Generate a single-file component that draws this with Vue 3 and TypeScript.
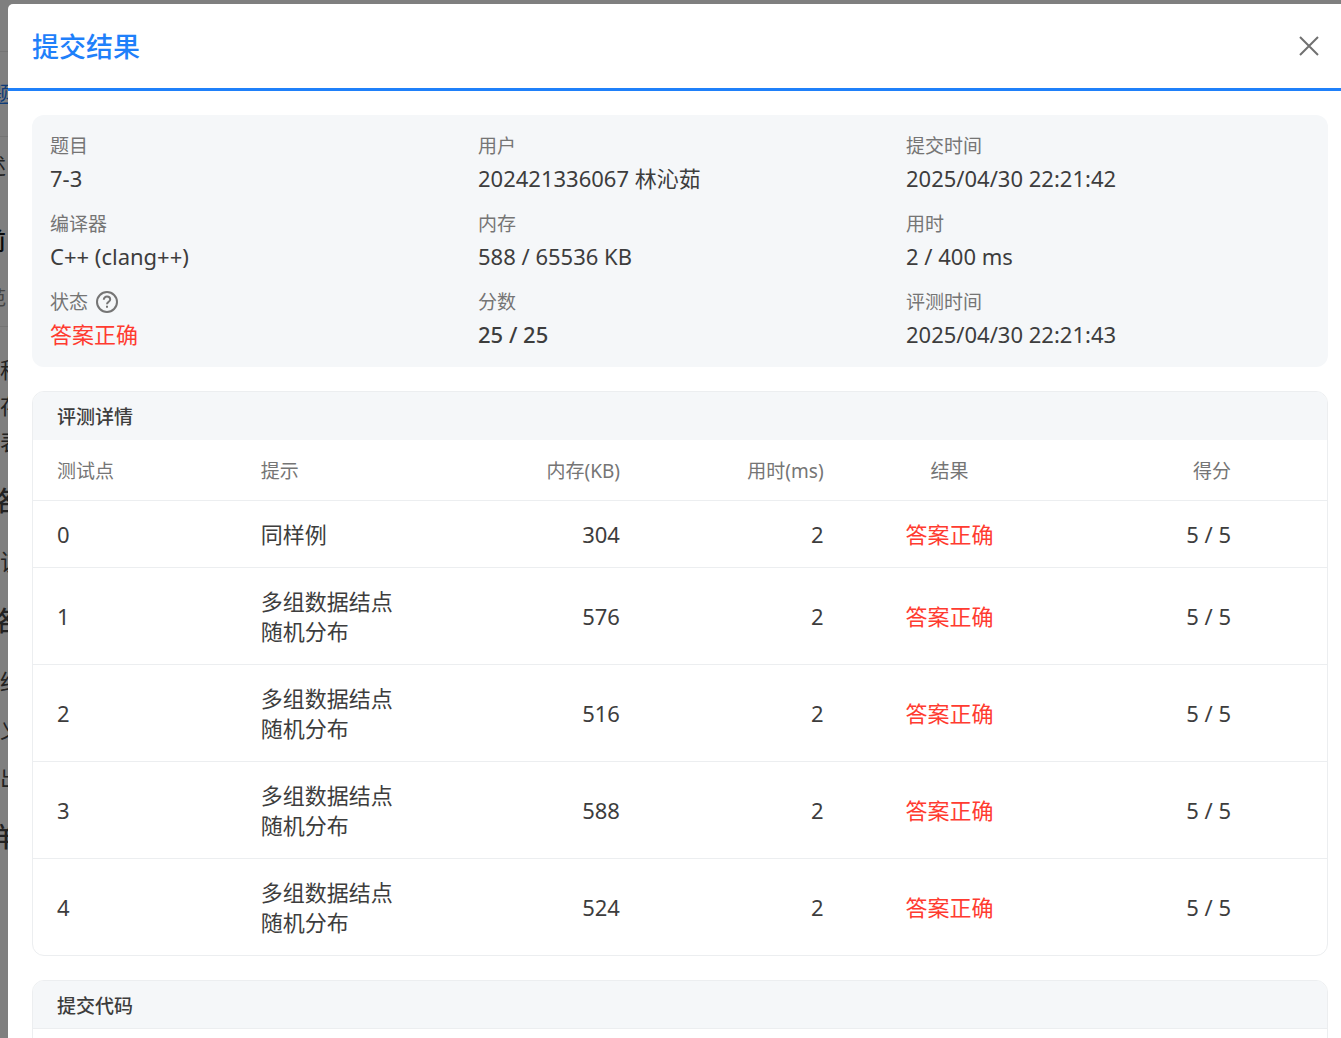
<script setup lang="ts">
interface Field {
  label: string
  value: string
  help?: boolean
  tone?: 'accepted' | 'strong'
}

interface TestPoint {
  id: number
  hint: string
  memory: number
  time: number
  result: string
  score: string
}

interface BackLine {
  text: string
  kind: string
}

const fields: Field[] = [
  { label: '题目', value: '7-3' },
  { label: '用户', value: '202421336067 林沁茹' },
  { label: '提交时间', value: '2025/04/30 22:21:42' },
  { label: '编译器', value: 'C++ (clang++)' },
  { label: '内存', value: '588 / 65536 KB' },
  { label: '用时', value: '2 / 400 ms' },
  { label: '状态', value: '答案正确', help: true, tone: 'accepted' },
  { label: '分数', value: '25 / 25', tone: 'strong' },
  { label: '评测时间', value: '2025/04/30 22:21:43' },
]

const scattered = '多组数据结点\n随机分布'

const points: TestPoint[] = [
  { id: 0, hint: '同样例', memory: 304, time: 2, result: '答案正确', score: '5 / 5' },
  { id: 1, hint: scattered, memory: 576, time: 2, result: '答案正确', score: '5 / 5' },
  { id: 2, hint: scattered, memory: 516, time: 2, result: '答案正确', score: '5 / 5' },
  { id: 3, hint: scattered, memory: 588, time: 2, result: '答案正确', score: '5 / 5' },
  { id: 4, hint: scattered, memory: 524, time: 2, result: '答案正确', score: '5 / 5' },
]

const backLines: BackLine[] = [
  { text: '程', kind: 'body' },
  { text: '存', kind: 'body' },
  { text: '表', kind: 'body' },
  { text: '格', kind: 'heading' },
  { text: '该', kind: 'body' },
  { text: '格', kind: 'heading' },
  { text: '结', kind: 'body' },
  { text: '义', kind: 'item' },
  { text: '出', kind: 'item' },
  { text: '样', kind: 'heading' },
]
</script>

<template>
  <div class="screen">
    <div class="page" aria-hidden="true">
      <div class="page-bar"></div>
      <div class="page-tabs">题</div>
      <div class="page-crumb">述</div>
      <div class="page-title">前</div>
      <div class="page-meta">范</div>
      <div class="page-text">
        <p v-for="(line, i) in backLines" :key="i" :class="line.kind">{{ line.text }}</p>
      </div>
    </div>

    <div class="mask">
      <section class="dialog" role="dialog" aria-labelledby="dialog-title">
        <header class="dialog-head">
          <h1 id="dialog-title">提交结果</h1>
          <button type="button" class="close" aria-label="关闭">
            <svg viewBox="0 0 20 20" width="20" height="20" fill="none" stroke="currentColor" stroke-width="2">
              <path d="M1 1 19 19M19 1 1 19" />
            </svg>
          </button>
        </header>

        <div class="dialog-body">
          <dl class="summary">
            <div v-for="field in fields" :key="field.label" class="field">
              <dt>
                {{ field.label }}
                <svg v-if="field.help" viewBox="0 0 22 22" width="22" height="22" fill="none" stroke="currentColor" stroke-width="2">
                  <circle cx="11" cy="11" r="10" />
                  <path d="M7.8 8.700C7.800 6.800 9.200 5.600 11 5.600s3.200 1.200 3.200 2.900c0 2.200-3.200 2.300-3.200 4.700" />
                  <path d="M11 14.800v2" />
                </svg>
              </dt>
              <dd :class="field.tone">{{ field.value }}</dd>
            </div>
          </dl>

          <section class="card">
            <h2>评测详情</h2>
            <table>
              <colgroup>
                <col span="6" />
                <col class="tail" />
              </colgroup>
              <thead>
                <tr>
                  <th>测试点</th>
                  <th>提示</th>
                  <th class="num">内存(KB)</th>
                  <th class="num">用时(ms)</th>
                  <th class="mid">结果</th>
                  <th class="num">得分</th>
                  <th></th>
                </tr>
              </thead>
              <tbody>
                <tr v-for="point in points" :key="point.id">
                  <td>{{ point.id }}</td>
                  <td class="hint">{{ point.hint }}</td>
                  <td class="num">{{ point.memory }}</td>
                  <td class="num">{{ point.time }}</td>
                  <td class="mid accepted">{{ point.result }}</td>
                  <td class="num">{{ point.score }}</td>
                  <td></td>
                </tr>
              </tbody>
            </table>
          </section>

          <section class="card code">
            <h2>提交代码</h2>
            <div class="code-area"></div>
          </section>
        </div>
      </section>
    </div>
  </div>
</template>

<style>
body {
  background: #fff;
  overflow: hidden;
}
</style>

<style scoped>
.screen {
  position: relative;
  height: 100vh;
  overflow: hidden;
  box-sizing: border-box;
  font-family: "Noto Sans", "Noto Sans CJK SC", sans-serif;
  font-size: 22px;
  line-height: 30px;
  color: #3d3d3d;
}

h1,
h2,
p,
dl,
dd {
  margin: 0;
}

.page {
  color: #444;
  white-space: nowrap;
}

.page-bar {
  height: 51px;
  border-bottom: 1px solid #e8e8e8;
}

.page-tabs {
  height: 84px;
  border-bottom: 1px solid #e8e8e8;
  line-height: 82px;
  color: #1a78f0;
  text-indent: -10px;
}

.page-crumb {
  line-height: 56px;
  text-indent: -16px;
}

.page-title {
  line-height: 96px;
  font-size: 24px;
  font-weight: 500;
  text-indent: -18px;
  color: #111;
}

.page-meta {
  height: 37px;
  border-bottom: 1px solid #e8e8e8;
  font-size: 19px;
  line-height: 18px;
  text-indent: -13px;
  color: #888;
}

.page-text {
  padding-top: 24px;
  line-height: 36px;
}

.heading {
  margin: 24px 0;
  font-size: 27px;
  font-weight: 500;
  text-indent: -12px;
}

.item {
  margin-top: 12px;
}

.mask {
  position: absolute;
  inset: 0;
  padding: 4px 0 0 8px;
  background: rgba(0, 0, 0, 0.5);
}

.dialog {
  background: #fff;
  border-top-left-radius: 5px;
}

.dialog-head {
  display: flex;
  align-items: center;
  justify-content: space-between;
  height: 84px;
  padding: 0 22px 0 24px;
  border-bottom: 3px solid #1f80fa;
}

h1 {
  padding-top: 2px;
  font-size: 27px;
  line-height: 36px;
  font-weight: 500;
  color: #1f80fa;
}

.close {
  display: flex;
  padding: 0;
  border: 0;
  background: none;
  color: #707070;
  cursor: pointer;
}

.dialog-body {
  display: flex;
  flex-direction: column;
  gap: 24px;
  padding: 24px 13px 24px 24px;
}

.summary {
  display: grid;
  grid-template-columns: repeat(3, 1fr);
  gap: 14px 24px;
  padding: 16px 18px;
  border-radius: 12px;
  background: #f5f7f9;
}

dt {
  display: flex;
  align-items: center;
  gap: 8px;
  font-size: 19px;
  line-height: 30px;
  color: #757575;
}

dd {
  line-height: 34px;
}

.strong {
  font-weight: 500;
}

.accepted {
  color: #ff3b30;
}

.card {
  border: 1px solid #eceef0;
  border-radius: 12px;
  overflow: hidden;
}

h2 {
  padding: 2px 24px 0;
  background: #f5f7f9;
  font-size: 19px;
  line-height: 46px;
  font-weight: 500;
}

table {
  width: 100%;
  table-layout: fixed;
  border-collapse: separate;
  border-spacing: 0;
}

.tail {
  width: 72px;
}

th,
td {
  padding: 18px 24px;
  border-bottom: 1px solid #eceef0;
  text-align: left;
  font-weight: 400;
}

th {
  padding: 19px 24px 17px;
  font-size: 19px;
  line-height: 24px;
  color: #757575;
}

tbody tr:last-child td {
  border-bottom: 0;
}

.hint {
  white-space: pre-line;
}

.num {
  text-align: right;
}

.mid {
  text-align: center;
}

.code h2 {
  box-sizing: border-box;
  height: 48px;
  border-bottom: 1px solid #eceef0;
}

.code-area {
  min-height: 240px;
}
</style>
